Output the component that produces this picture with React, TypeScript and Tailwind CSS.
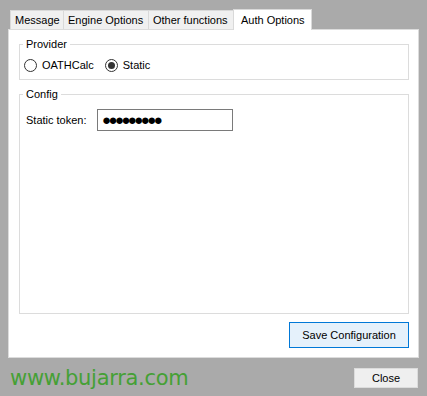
import React from "react";

const tabs = ["Message", "Engine Options", "Other functions"];
const tabWidths = ["w-[53px]", "w-[85px]", "w-[85px]"];

function Radio({ label, checked }: { label: string; checked?: boolean }) {
  return (
    <label className="flex items-center gap-[5px]">
      <span className="flex h-[13px] w-[13px] items-center justify-center rounded-full border border-[#333333] bg-white">
        {checked && <span className="h-[7px] w-[7px] rounded-full bg-[#333333]" />}
      </span>
      <span>{label}</span>
    </label>
  );
}

export default function App() {
  return (
    <div
      className="relative h-[396px] w-[427px] overflow-hidden bg-[#aaaaaa] pt-[9px] text-[11px] leading-[14px] text-black"
      style={{ fontFamily: '"Liberation Sans", Arial, sans-serif' }}
    >
      {/* tab strip */}
      <div className="ml-[10px] flex h-[20px] items-end">
        {tabs.map((t, i) => (
          <div
            key={t}
            className={`flex h-[19px] items-center border-l border-t border-[#d9d9d9] bg-[#f0f0f0] pl-[4px] ${tabWidths[i]}`}
          >
            {t}
          </div>
        ))}
        <div className="relative z-10 -mb-px flex h-[21px] w-[79px] items-start border-x border-t border-[#d9d9d9] bg-white pl-[7px] pt-[3px]">
          Auth Options
        </div>
      </div>

      {/* tab page */}
      <div className="ml-[8px] flex h-[329px] w-[411px] flex-col border border-[#dcdcdc] bg-white pl-[10px] pr-[9px] pt-[6px]">
        <fieldset className="h-[44px] border border-[#dcdcdc] px-0">
          <legend className="ml-[3px] px-[3px] leading-[16px]">Provider</legend>
          <div className="mt-[6px] flex items-center gap-[11px] pl-[4px]">
            <Radio label="OATHCalc" />
            <Radio label="Static" checked />
          </div>
        </fieldset>

        <fieldset className="mt-[6px] h-[228px] border border-[#dcdcdc] px-0">
          <legend className="ml-[3px] px-[3px] leading-[16px]">Config</legend>
          <div className="mt-[7px] flex items-center pl-[6px]">
            <span className="w-[71px]">Static token:</span>
            <div className="flex h-[22px] w-[136px] items-center border border-[#7a7a7a] pl-[4px] text-[15px] tracking-[-2.6px]">
              ●●●●●●●●●
            </div>
          </div>
        </fieldset>

        <div className="mt-[8px] flex justify-end">
          <button className="h-[26px] w-[120px] border border-[#0078d7] bg-[#e5f1fb]">
            Save Configuration
          </button>
        </div>
      </div>

      {/* footer */}
      <div className="mt-[8px] flex items-center justify-between pl-[10px] pr-[9px]">
        <span
          className="text-[21px] leading-[24px] tracking-[-0.3px] text-[#45a035]"
          style={{ fontFamily: '"DejaVu Sans", Verdana, sans-serif' }}
        >
          www.bujarra.com
        </span>
        <button className="h-[20px] w-[64px] border border-[#dcdcdc] bg-[#efefef]">Close</button>
      </div>
    </div>
  );
}
